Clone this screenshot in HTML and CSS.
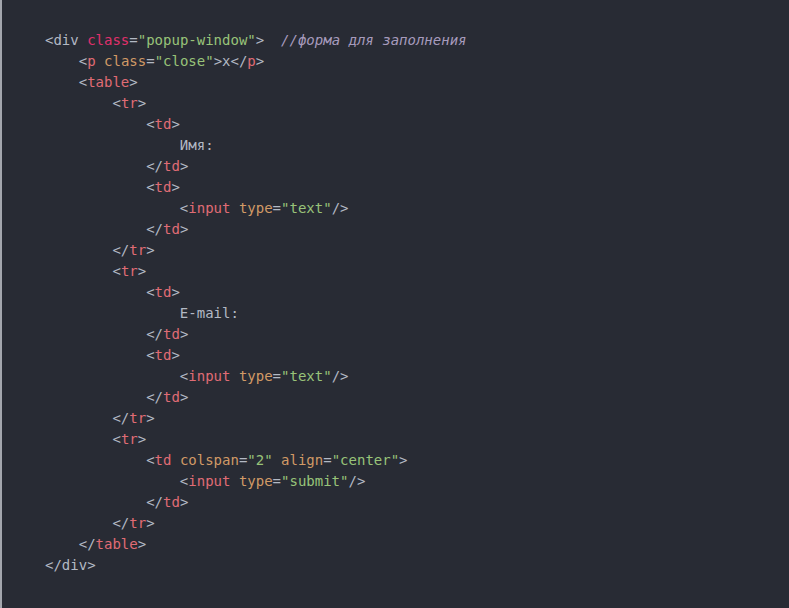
FILE: index.html
```html
<!DOCTYPE html>
<html lang="ru">
<head>
<meta charset="utf-8">
<title>Code</title>
<link rel="stylesheet" href="styles.css">
</head>
<body>
<div class="code-block">
<pre class="code"><span class="p">&lt;div</span> <span class="k">class</span><span class="p">=</span><span class="s">"popup-window"</span><span class="p">&gt;</span>  <span class="c">//форма для заполнения</span>
    <span class="p">&lt;</span><span class="t">p</span> <span class="a">class</span><span class="p">=</span><span class="s">"close"</span><span class="p">&gt;x&lt;/</span><span class="t">p</span><span class="p">&gt;</span>
    <span class="p">&lt;</span><span class="t">table</span><span class="p">&gt;</span>
        <span class="p">&lt;</span><span class="t">tr</span><span class="p">&gt;</span>
            <span class="p">&lt;</span><span class="t">td</span><span class="p">&gt;</span>
                <span class="p">Имя:</span>
            <span class="p">&lt;/</span><span class="t">td</span><span class="p">&gt;</span>
            <span class="p">&lt;</span><span class="t">td</span><span class="p">&gt;</span>
                <span class="p">&lt;</span><span class="t">input</span> <span class="a">type</span><span class="p">=</span><span class="s">"text"</span><span class="p">/&gt;</span>
            <span class="p">&lt;/</span><span class="t">td</span><span class="p">&gt;</span>
        <span class="p">&lt;/</span><span class="t">tr</span><span class="p">&gt;</span>
        <span class="p">&lt;</span><span class="t">tr</span><span class="p">&gt;</span>
            <span class="p">&lt;</span><span class="t">td</span><span class="p">&gt;</span>
                <span class="p">E-mail:</span>
            <span class="p">&lt;/</span><span class="t">td</span><span class="p">&gt;</span>
            <span class="p">&lt;</span><span class="t">td</span><span class="p">&gt;</span>
                <span class="p">&lt;</span><span class="t">input</span> <span class="a">type</span><span class="p">=</span><span class="s">"text"</span><span class="p">/&gt;</span>
            <span class="p">&lt;/</span><span class="t">td</span><span class="p">&gt;</span>
        <span class="p">&lt;/</span><span class="t">tr</span><span class="p">&gt;</span>
        <span class="p">&lt;</span><span class="t">tr</span><span class="p">&gt;</span>
            <span class="p">&lt;</span><span class="t">td</span> <span class="a">colspan</span><span class="p">=</span><span class="s">"2"</span> <span class="a">align</span><span class="p">=</span><span class="s">"center"</span><span class="p">&gt;</span>
                <span class="p">&lt;</span><span class="t">input</span> <span class="a">type</span><span class="p">=</span><span class="s">"submit"</span><span class="p">/&gt;</span>
            <span class="p">&lt;/</span><span class="t">td</span><span class="p">&gt;</span>
        <span class="p">&lt;/</span><span class="t">tr</span><span class="p">&gt;</span>
    <span class="p">&lt;/</span><span class="t">table</span><span class="p">&gt;</span>
<span class="p">&lt;/div&gt;</span></pre>
</div>
</body>
</html>
```
FILE: styles.css
```css
html, body {
  margin: 0;
  padding: 0;
  background: #282b34;
}
.code-block {
  box-sizing: border-box;
  width: 789px;
  height: 608px;
  background: #282b34;
  border-left: 2px solid #a3a6ad;
  padding: 30px 0 0 43px;
}
.code {
  margin: 0;
  font-family: "DejaVu Sans Mono", "Liberation Mono", monospace;
  font-size: 14px;
  line-height: 21px;
  color: #b3b9c4;
  white-space: pre;
}
.p { color: #b3b9c4; }
.t { color: #e06c75; }
.a { color: #d19a66; }
.k { color: #e0306c; }
.s { color: #98c379; }
.c { color: #a79bbd; font-style: italic; }
```
